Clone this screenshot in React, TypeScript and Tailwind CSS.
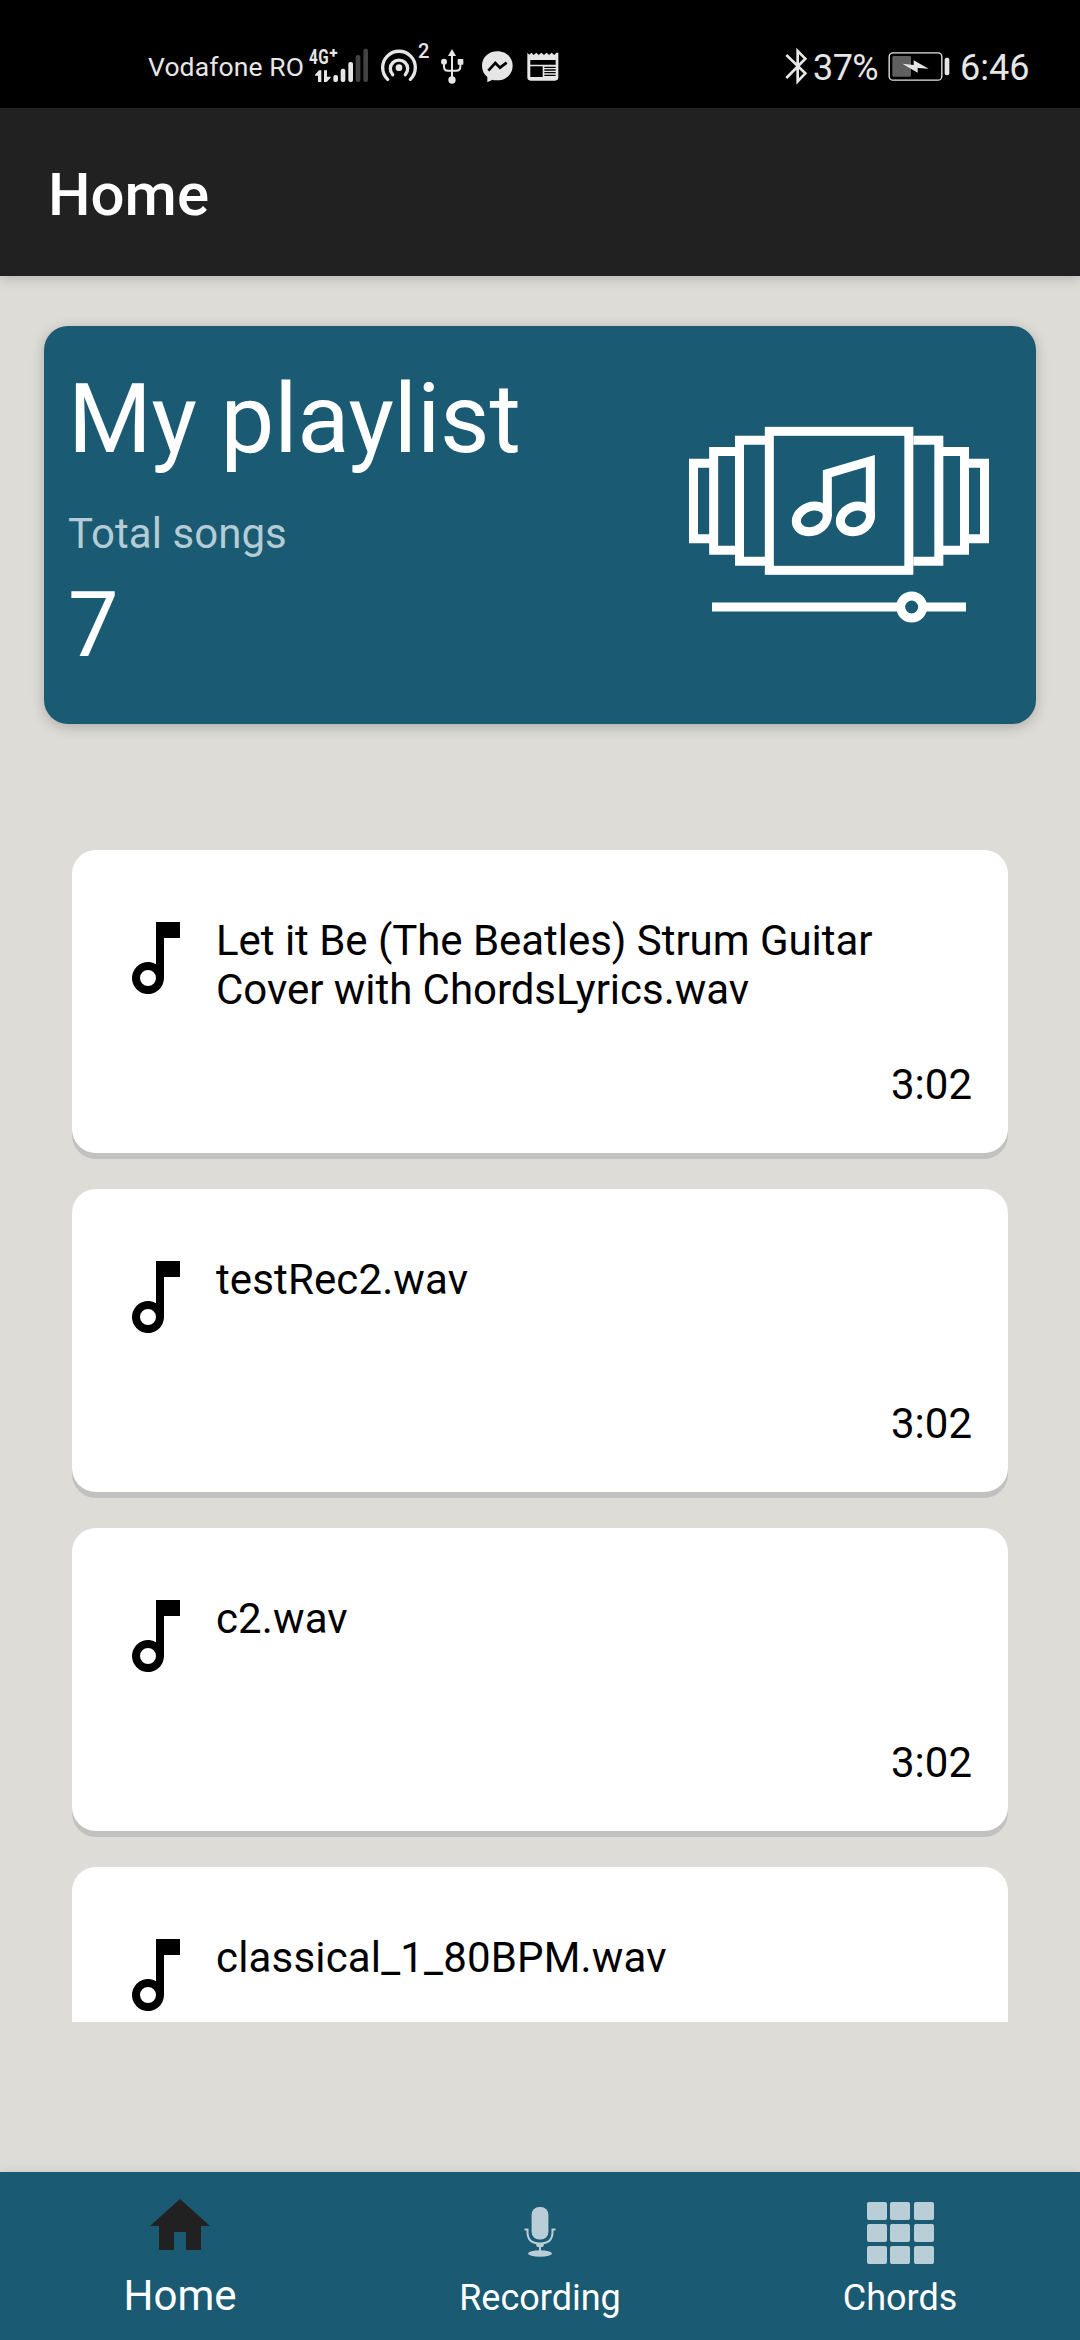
import React from "react";

type Song = { title: string; time?: string; tracking: string };

const songs: Song[] = [
  { title: "Let it Be (The Beatles) Strum Guitar Cover with ChordsLyrics.wav", time: "3:02", tracking: "tracking-[-0.04px]" },
  { title: "testRec2.wav", time: "3:02", tracking: "tracking-[0.12px]" },
  { title: "c2.wav", time: "3:02", tracking: "tracking-[0.12px]" },
  { title: "classical_1_80BPM.wav", tracking: "tracking-[0.17px]" },
];

const INK = "#e6e6e6";

function SignalIcon() {
  return (
    <svg className="ml-[5px] h-[78px] w-[60px] shrink-0" viewBox="537 0 180 234" fill={INK}>
      <g fontFamily="Roboto" fontWeight="700">
        <text transform="translate(537 102) scale(.74 1)" fontSize="62">4</text>
        <text transform="translate(565 102) scale(.74 1)" fontSize="62">G</text>
      </g>
      <path d="M607 57h7v8h8v7h-8v8h-7v-8h-8v-7h8z" />
      <path d="M567 121h7v35h-10v-19h-9v-3zM582 121h9v19h11v3l-12 13h-8z" />
      <rect x="610" y="135" width="14" height="21" rx="6" />
      <rect x="632" y="116" width="14" height="40" rx="6" />
      <rect x="655" y="96" width="14" height="60" rx="6" />
      <rect x="677" y="75" width="14" height="81" rx="6" fill="#424242" />
      <rect x="700" y="56" width="14" height="100" rx="6" fill="#424242" />
    </svg>
  );
}

function HotspotIcon() {
  return (
    <svg className="ml-[11px] h-[78px] w-[52px] shrink-0" viewBox="750 0 156 234" fill="none" stroke={INK} strokeWidth="10" strokeLinecap="round">
      <circle cx="807" cy="113" r="10" fill={INK} stroke="none" />
      <path d="M788 134a26 26 0 1 1 38 0" />
      <path d="M773 148a49 49 0 1 1 68 0" />
      <text x="864" y="83" fontFamily="Roboto" fontWeight="500" fontSize="60" fill={INK} stroke="none">2</text>
    </svg>
  );
}

function UsbIcon() {
  return (
    <svg className="ml-[8px] h-[78px] w-[24px] shrink-0" viewBox="931 0 72 234" fill={INK}>
      <path d="M967 57l12 21h-24z" />
      <path d="M967 70v80M943 96v14q0 12 12 12h24q13 0 13-12V96" fill="none" stroke={INK} strokeWidth="6" />
      <circle cx="943" cy="95" r="9" />
      <rect x="984" y="87" width="17" height="17" rx="2" />
      <circle cx="967" cy="150" r="11" />
    </svg>
  );
}

function MessengerIcon() {
  return (
    <svg className="ml-[17px] h-[78px] w-[32px] shrink-0" viewBox="1054 0 96 234">
      <path d="M1103 64c-27 0-46 19-46 43 0 14 6 26 16 34v16l16-8c4 2 9 2 14 2 27 0 46-19 46-44s-19-43-46-43z" fill={INK} />
      <path d="M1076 122l21-23 14 14 20-15" fill="none" stroke="#000" strokeWidth="8" />
    </svg>
  );
}

function NewsIcon() {
  return (
    <svg className="ml-[14px] h-[78px] w-[32px] shrink-0" viewBox="1190 0 96 234">
      <path d="M1191 68l6 6 6-6 7 7 8-7 7 7 8-7 8 7 8-7 7 7 8-7 8 7 6-7 6 0v74q0 10-10 10h-73q-10 0-10-10z" fill={INK} />
      <path d="M1200 90h76v14h-76zM1200 109h37v32h-37z" fill="#000" />
      <path d="M1242 112h34M1242 120h34M1242 128h34M1242 136h34" stroke="#000" strokeWidth="4" />
    </svg>
  );
}

function StatusBar() {
  return (
    <div className="flex h-[108px] items-start bg-black pt-[30px] text-[#e6e6e6]">
      <span className="ml-[148px] w-[156px] whitespace-nowrap text-[26.500px] leading-[74px] tracking-[0.1px]">Vodafone RO</span>
      <SignalIcon />
      <HotspotIcon />
      <UsbIcon />
      <MessengerIcon />
      <NewsIcon />
      <div className="ml-auto flex pr-[51px]">
        <svg className="h-[78px] w-[24px]" viewBox="75 0 72 234" fill="none" stroke={INK} strokeWidth="8">
          <path d="M79 75l57 55-23 24V63l23 23-57 58" />
        </svg>
        <span className="ml-[4px] w-[67px] whitespace-nowrap text-[36px] leading-[76px] tracking-[-0.6px]">37%</span>
        <svg className="ml-[8px] h-[78px] w-[62px]" viewBox="385 0 186 234">
          <rect x="388.500" y="68.500" width="158" height="82" rx="12" fill="none" stroke={INK} strokeWidth="4" />
          <rect x="398" y="78" width="56" height="62" rx="4" fill="#606060" />
          <path d="M428 101L462 105V91L507 116L474 114V128z" fill={INK} />
          <rect x="555" y="83" width="14" height="53" rx="6" fill={INK} />
        </svg>
        <span className="ml-[10px] w-[69px] whitespace-nowrap text-[36px] leading-[76px]">6:46</span>
      </div>
    </div>
  );
}

function PlaylistArt() {
  return (
    <svg className="h-[200px] w-[304px]" viewBox="84 76 912 600" fill="none" stroke="#fff" strokeWidth="27">
      <rect x="328" y="95" width="418.500" height="417" />
      <path d="M315 122H238.500V485H315M225 155.500H161V452H225M148 191H100.500V417H148" />
      <path d="M760 122H836.500V485H760M850 155.500H913.500V452H850M927 191H973.500V417H927" />
      <path d="M502 350V222L631 184V350" />
      <path d="M502 347c0-17-18-28-38-28-28 0-55 22-55 46 0 19 17 31 38 31 29 0 55-22 55-49zM632 347c0-17-18-28-38-28-27 0-53 22-53 46 0 19 17 31 38 31 28 0 53-22 53-49z" />
      <path d="M156 622H712M798 622H918" />
      <circle cx="755" cy="622" r="33" />
    </svg>
  );
}

function SongCard({ title, time, tracking }: Song) {
  return (
    <li className="mb-9 flex h-[303px] shrink-0 rounded-3xl bg-white pl-9 pr-9 shadow-[0_6px_0_#c1c1bf]">
      <svg className="mt-[60px] size-24 shrink-0" viewBox="0 0 24 24">
        <path d="M12 3v10.550A4 4 0 1 0 14 17V7h4V3zM10 19a2 2 0 1 1 0-4 2 2 0 0 1 0 4z" />
      </svg>
      <div className="ml-3 flex flex-1 flex-col pt-[66px] text-[42px] leading-[49px]">
        <p className={`h-[144px] w-[700px] ${tracking}`}>{title}</p>
        {time && <p className="text-right">{time}</p>}
      </div>
    </li>
  );
}

function NavItem({ label, active, children }: { label: string; active?: boolean; children: React.ReactNode }) {
  return (
    <a className="flex flex-1 flex-col items-center pt-[18px] text-white">
      <span className="flex h-[78px] items-start justify-center">{children}</span>
      <span className={active ? "mt-[3px] text-[42px] leading-[49px]" : "mt-[5px] text-[36px] leading-[50px]"}>{label}</span>
    </a>
  );
}

export default function App() {
  return (
    <div className="flex h-[2340px] w-[1080px] flex-col overflow-hidden bg-[#dddcd7] font-['Roboto',sans-serif] text-black">
      <StatusBar />
      <header className="flex h-[168px] items-center bg-[#212121] pl-12 text-white shadow-[0_2px_12px_rgba(0,0,0,0.2)]">
        <h1 className="pt-[5px] text-[60px] font-medium leading-[70px]">Home</h1>
      </header>

      <section className="mx-11 mt-[50px] flex h-[398px] justify-between rounded-3xl bg-[#1a5a72] pl-6 text-white shadow-[0_3px_14px_rgba(0,0,0,0.22)]">
        <div className="flex flex-col pt-[37px]">
          <h2 className="whitespace-nowrap text-[96px] leading-[112px] tracking-[-0.2px]">My playlist</h2>
          <p className="mt-[34px] text-[42px] leading-[49px] tracking-[0.05px] text-[#b3ccd5]">Total songs</p>
          <p className="mt-[15px] text-[90px] leading-[105px]">7</p>
        </div>
        <div className="mr-[44px] mt-[99px]">
          <PlaylistArt />
        </div>
      </section>

      <ul className="mx-[72px] mt-[126px] flex h-[1172px] flex-col overflow-hidden">
        {songs.map((s) => (
          <SongCard key={s.title} {...s} />
        ))}
      </ul>

      <nav className="mt-auto flex h-[168px] bg-[#1a5a72] shadow-[0_0_10px_rgba(0,0,0,0.1)]">
        <NavItem label="Home" active>
          <svg className="size-[72px]" viewBox="0 0 24 24" fill="#212121">
            <path d="M10 20v-6h4v6h5v-8h3L12 3 2 12h3v8z" />
          </svg>
        </NavItem>
        <NavItem label="Recording">
          <svg className="h-[72px] w-[72px]" viewBox="504 2190 72 72" fill="#b9ced6">
            <rect x="531.600" y="2207" width="16.800" height="32.500" rx="7.500" />
            <path d="M524.500 2229.500H527.500V2232Q527.500 2243.500 540 2243.500T552.500 2232V2229.500H555.500" fill="none" stroke="#b9ced6" strokeWidth="2" />
            <path d="M535.500 2243h9l-1.500 4h-2v5h-2v-5h-2z" />
            <ellipse cx="540" cy="2253.500" rx="12" ry="3.200" />
          </svg>
        </NavItem>
        <NavItem label="Chords">
          <span className="mt-[12px] grid grid-cols-3 gap-x-[3.500px] gap-y-1">
            {Array.from({ length: 9 }, (_, i) => (
              <span key={i} className="h-[18px] w-5 rounded-[2px] bg-[#b9ced6]" />
            ))}
          </span>
        </NavItem>
      </nav>
    </div>
  );
}
